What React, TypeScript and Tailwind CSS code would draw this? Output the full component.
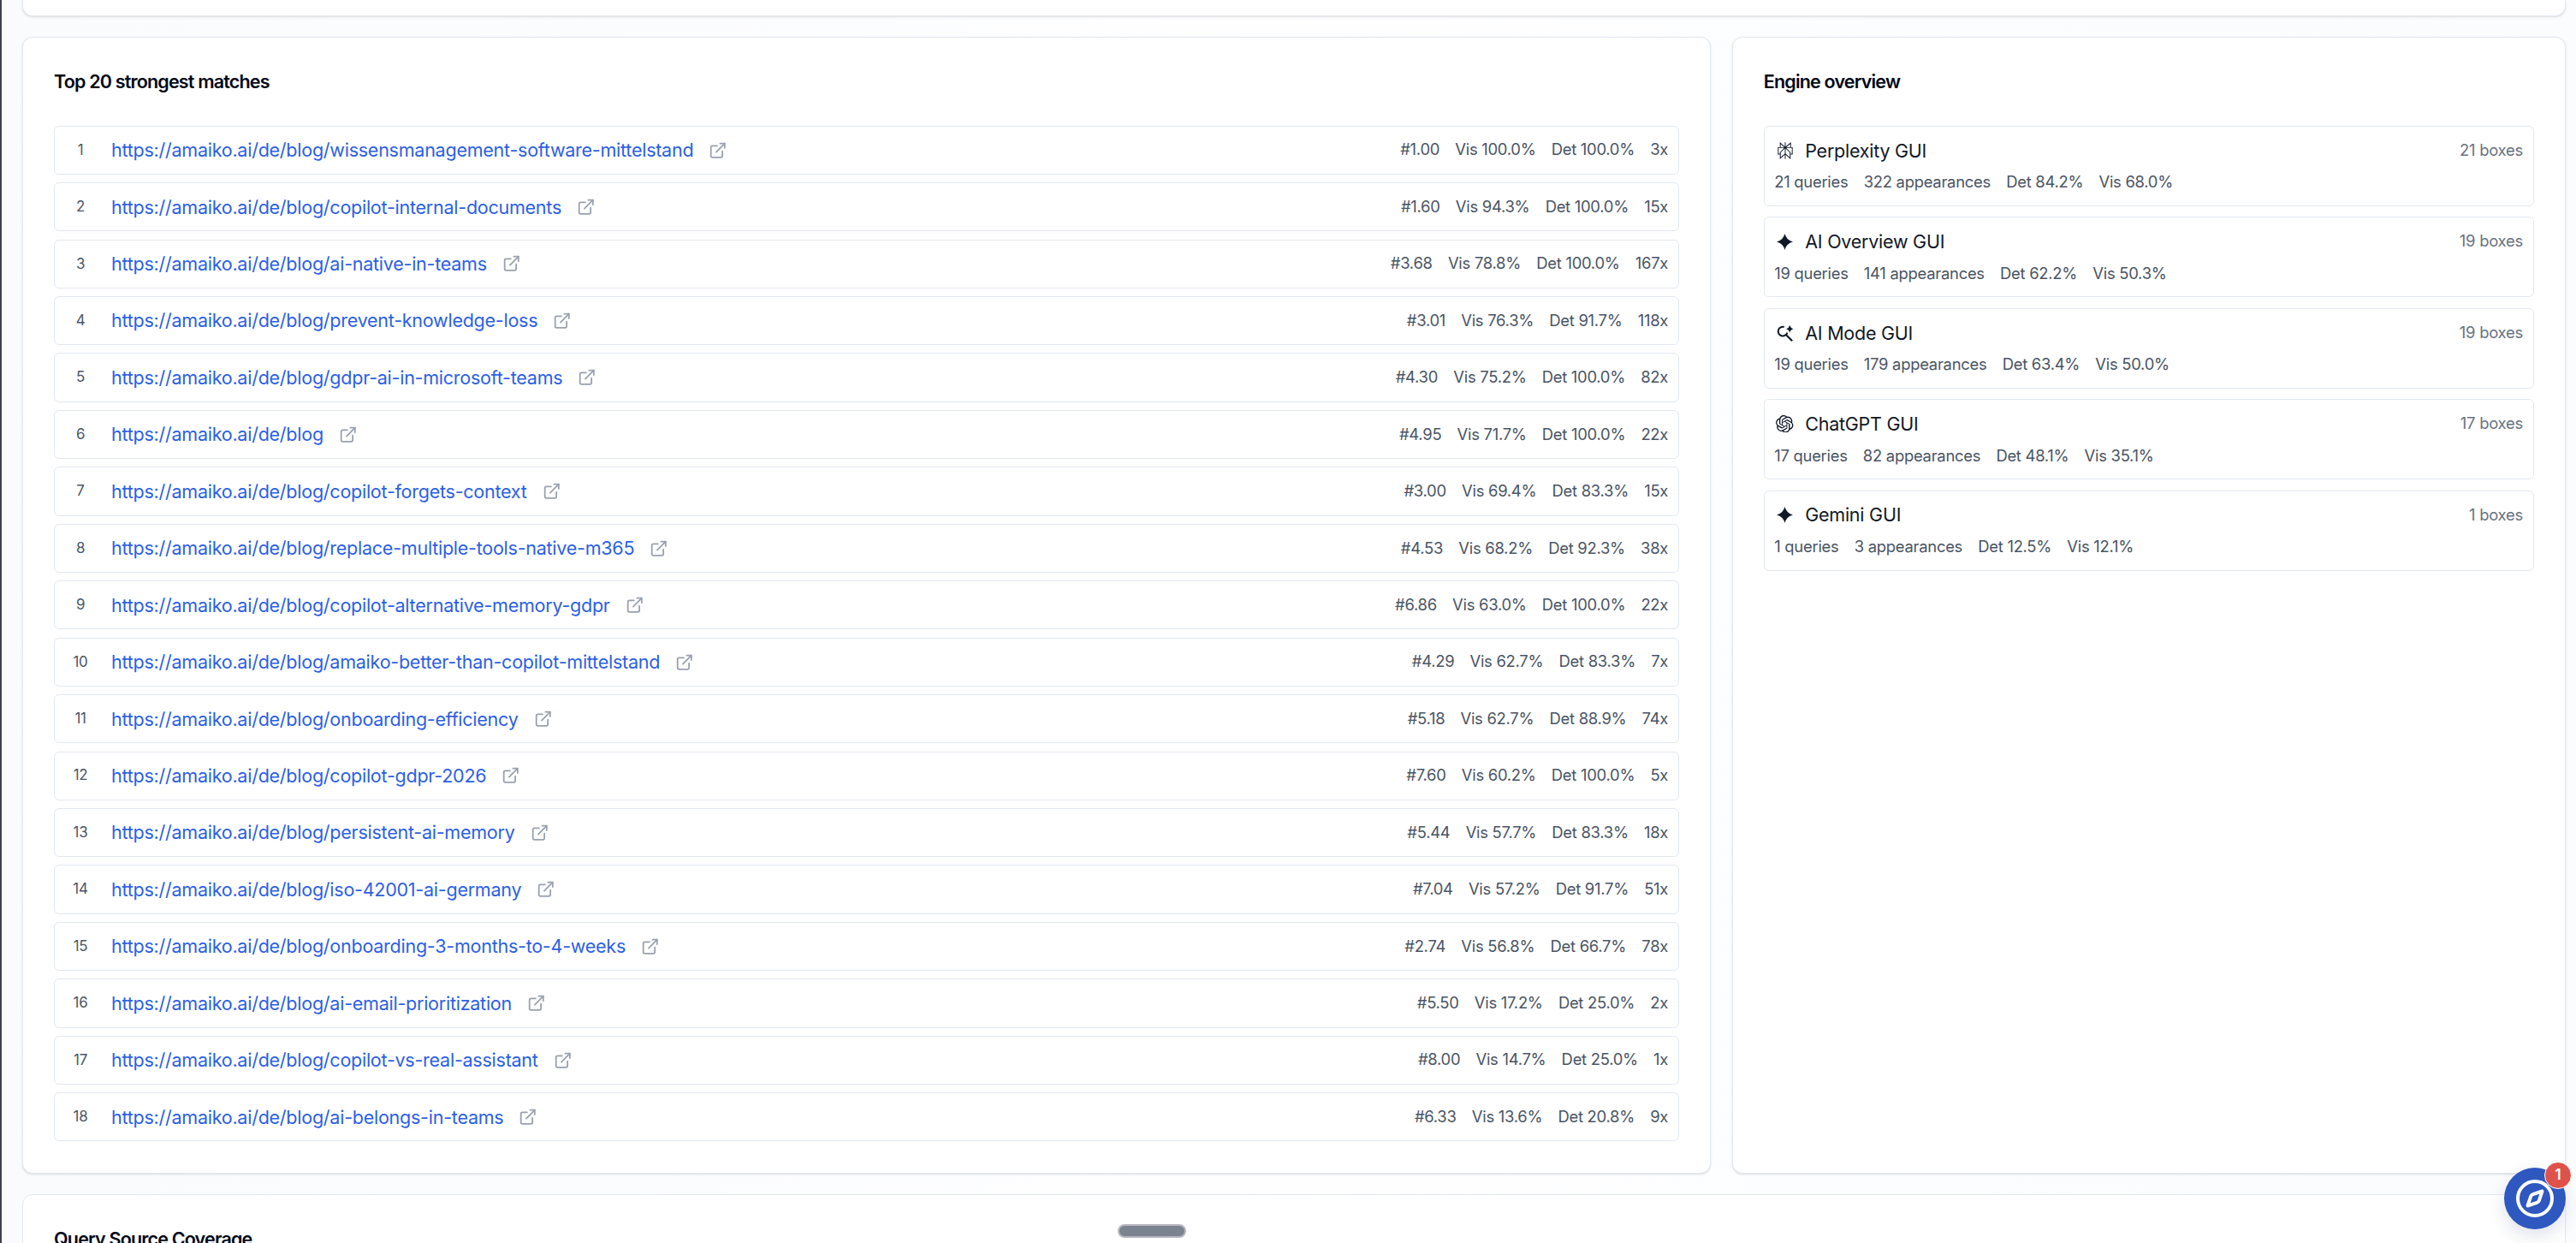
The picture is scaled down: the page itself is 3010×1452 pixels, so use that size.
import { Compass, ExternalLink } from "lucide-react"
import { SiOpenai, SiPerplexity } from "react-icons/si"

const matches = [
  { path: "/wissensmanagement-software-mittelstand", rank: "1.00", vis: "100.0", det: "100.0", count: 3 },
  { path: "/copilot-internal-documents", rank: "1.60", vis: "94.3", det: "100.0", count: 15 },
  { path: "/ai-native-in-teams", rank: "3.68", vis: "78.8", det: "100.0", count: 167 },
  { path: "/prevent-knowledge-loss", rank: "3.01", vis: "76.3", det: "91.7", count: 118 },
  { path: "/gdpr-ai-in-microsoft-teams", rank: "4.30", vis: "75.2", det: "100.0", count: 82 },
  { path: "", rank: "4.95", vis: "71.7", det: "100.0", count: 22 },
  { path: "/copilot-forgets-context", rank: "3.00", vis: "69.4", det: "83.3", count: 15 },
  { path: "/replace-multiple-tools-native-m365", rank: "4.53", vis: "68.2", det: "92.3", count: 38 },
  { path: "/copilot-alternative-memory-gdpr", rank: "6.86", vis: "63.0", det: "100.0", count: 22 },
  { path: "/amaiko-better-than-copilot-mittelstand", rank: "4.29", vis: "62.7", det: "83.3", count: 7 },
  { path: "/onboarding-efficiency", rank: "5.18", vis: "62.7", det: "88.9", count: 74 },
  { path: "/copilot-gdpr-2026", rank: "7.60", vis: "60.2", det: "100.0", count: 5 },
  { path: "/persistent-ai-memory", rank: "5.44", vis: "57.7", det: "83.3", count: 18 },
  { path: "/iso-42001-ai-germany", rank: "7.04", vis: "57.2", det: "91.7", count: 51 },
  { path: "/onboarding-3-months-to-4-weeks", rank: "2.74", vis: "56.8", det: "66.7", count: 78 },
  { path: "/ai-email-prioritization", rank: "5.50", vis: "17.2", det: "25.0", count: 2 },
  { path: "/copilot-vs-real-assistant", rank: "8.00", vis: "14.7", det: "25.0", count: 1 },
  { path: "/ai-belongs-in-teams", rank: "6.33", vis: "13.6", det: "20.8", count: 9 },
]

const engines = [
  { icon: "perplexity", name: "Perplexity GUI", queries: 21, appearances: 322, det: "84.2", vis: "68.0" },
  { icon: "spark", name: "AI Overview GUI", queries: 19, appearances: 141, det: "62.2", vis: "50.3" },
  { icon: "aimode", name: "AI Mode GUI", queries: 19, appearances: 179, det: "63.4", vis: "50.0" },
  { icon: "openai", name: "ChatGPT GUI", queries: 17, appearances: 82, det: "48.1", vis: "35.1" },
  { icon: "spark", name: "Gemini GUI", queries: 1, appearances: 3, det: "12.5", vis: "12.1" },
]

function EngineIcon({ icon }: { icon: string }) {
  if (icon === "perplexity") return <SiPerplexity size={20} />
  if (icon === "openai") return <SiOpenai size={20.5} />
  if (icon === "aimode") {
    return (
      <svg width="22" height="22" viewBox="0 0 22 22" fill="none">
        <path d="M9.8 3.9A5.4 5.4 0 1 0 13.4 10.4" stroke="currentColor" strokeWidth="2" />
        <path d="M11.8 13L19.2 20.3" stroke="currentColor" strokeWidth="2.2" />
        <path d="M16.3 1.9q.9 3.4 4.3 4.3-3.4.9-4.3 4.3-.9-3.4-4.3-4.3 3.4-.9 4.3-4.3z" fill="currentColor" />
      </svg>
    )
  }
  return (
    <svg width="19" height="19" viewBox="0 0 24 24" fill="currentColor">
      <path d="M12 0Q14.4 9.6 24 12 14.4 14.4 12 24 9.6 14.4 0 12 9.6 9.6 12 0z" />
    </svg>
  )
}

function CardTitle({ children }: { children: string }) {
  return (
    <h3 className="text-[21.5px] leading-[29px] font-semibold tracking-[-0.82px] text-[#020817]">
      {children}
    </h3>
  )
}

export default function App() {
  return (
    <div className="flex h-[1452px] w-[3010px] overflow-hidden bg-white font-['Inter',sans-serif] tracking-[-0.26px]">

      {/* Sidebar edge */}
      <div className="w-[2px] shrink-0 bg-[#3d4258]" />

      <main className="flex min-w-0 flex-1 flex-col gap-[24.6px] bg-linear-to-r from-[#fafbfd] via-[#fefeff] to-[#fbfcfe] pr-[12px] pl-[24px]">
        <div className="h-[19px] shrink-0 rounded-b-[12px] border border-t-0 border-slate-200 bg-white shadow-sm" />

        <div className="-mt-[0.6px] grid shrink-0 grid-cols-3 gap-[24.6px]">

          {/* Matches */}
          <section className="col-span-2 rounded-[12px] border border-slate-200 bg-white px-[36px] py-[36.5px] shadow-sm">
            <CardTitle>Top 20 strongest matches</CardTitle>

            <div className="mt-[37.2px] flex flex-col gap-[9.2px]">
              {matches.map((m, i) => (
                <div
                  key={m.path}
                  className="flex h-[57.26px] items-center rounded-[6px] border border-slate-200 px-[12px]"
                >
                  <span className="w-[36px] text-center text-[16.9px] text-gray-600">
                    {i + 1}
                  </span>
                  <a className="ml-[18px] text-[21.54px] text-[#2c5fe6]">
                    https://amaiko.ai/de/blog{m.path}
                  </a>
                  <ExternalLink size={21.5} className="ml-[18px] text-gray-400" />

                  <div className="ml-auto flex gap-[18.2px] text-[18.46px] tracking-[-0.28px] text-gray-600">
                    <span>#{m.rank}</span>
                    <span>Vis {m.vis}%</span>
                    <span>Det {m.det}%</span>
                    <span>{m.count}x</span>
                  </div>
                </div>
              ))}
            </div>
          </section>

          {/* Engines */}
          <section className="rounded-[12px] border border-slate-200 bg-white px-[36px] py-[36.5px] shadow-sm">
            <CardTitle>Engine overview</CardTitle>

            <div className="mt-[37.2px] flex flex-col gap-[12.3px]">
              {engines.map((e) => (
                <div
                  key={e.name}
                  className="h-[94.2px] rounded-[6px] border border-slate-200 p-[12px]"
                >
                  <div className="flex h-[32px] items-center text-gray-900">
                    <span className="flex w-[24px] justify-center">
                      <EngineIcon icon={e.icon} />
                    </span>
                    <span className="ml-[11.5px] text-[21.54px]">{e.name}</span>
                    <span className="ml-auto text-[18.46px] text-gray-500">
                      {e.queries} boxes
                    </span>
                  </div>
                  <div className="mt-[6.5px] -ml-[0.5px] flex gap-[18.2px] text-[18.46px] leading-[28px] tracking-[-0.28px] text-gray-600">
                    <span>{e.queries} queries</span>
                    <span>{e.appearances} appearances</span>
                    <span>Det {e.det}%</span>
                    <span>Vis {e.vis}%</span>
                  </div>
                </div>
              ))}
            </div>
          </section>
        </div>

        <section className="h-[200px] shrink-0 rounded-t-[12px] border border-slate-200 bg-white px-[36px] py-[36.5px]">
          <CardTitle>Query Source Coverage</CardTitle>
        </section>
      </main>

      {/* Drag handle */}
      <div className="absolute top-[1430px] left-[1306px] h-[16px] w-[80px] rounded-full border-2 border-[#b5b7bd] bg-[#7b8390]" />

      {/* Guide button */}
      <button className="absolute top-[1364px] left-[2926px] flex size-[72px] items-center justify-center rounded-full bg-[#2e57c0] text-white shadow-[0_8px_20px_rgba(30,50,110,0.14)]">
        <Compass size={48} />
        <span className="absolute -top-[7px] -right-[7px] flex size-[32px] items-center justify-center rounded-full border border-white bg-[#de524c] text-[16.9px] font-semibold">
          1
        </span>
      </button>
    </div>
  )
}
